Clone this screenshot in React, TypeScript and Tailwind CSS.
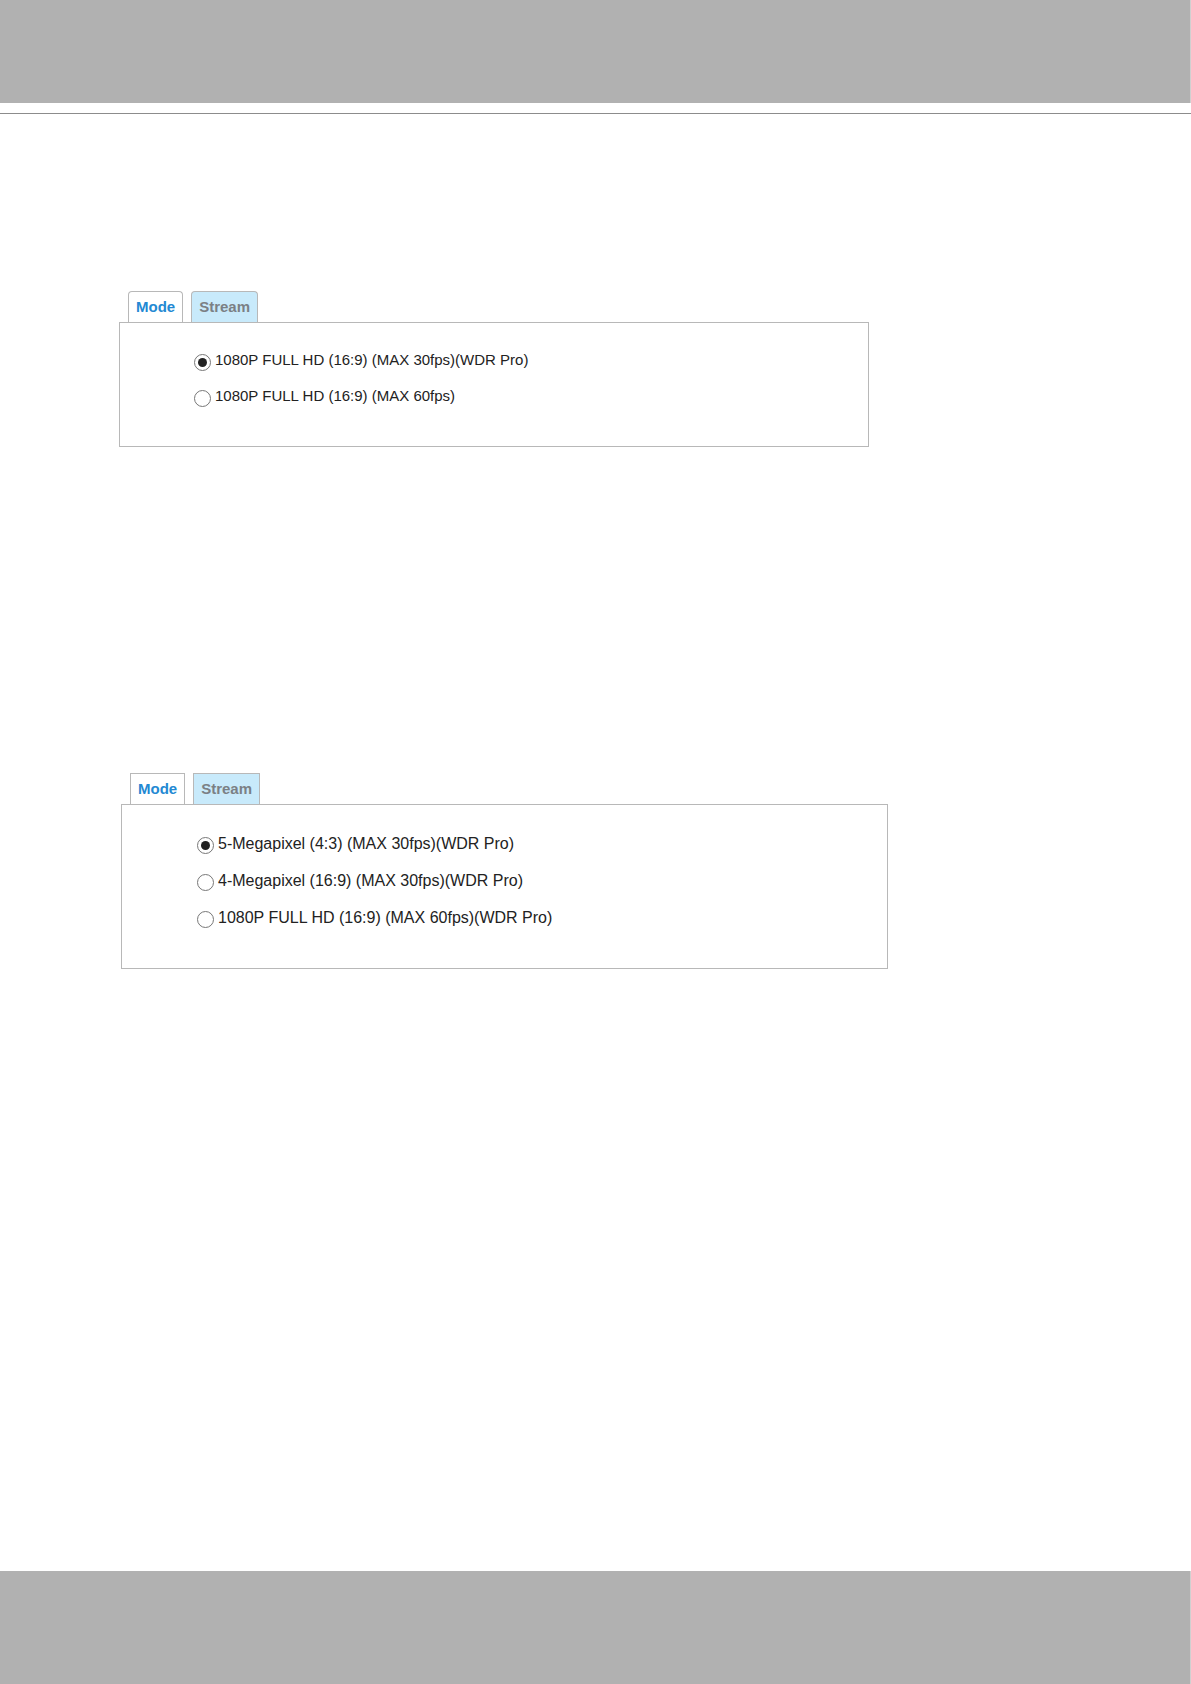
import { useState } from 'react'
import { clsx } from 'clsx'

interface ModePanelProps {
  name: string
  modes: string[]
  rounded?: boolean
  className?: string
  bodyClass: string
}

const TABS = ['Mode', 'Stream']

const SENSOR_A = [
  '1080P FULL HD (16:9) (MAX 30fps)(WDR Pro)',
  '1080P FULL HD (16:9) (MAX 60fps)',
]

const SENSOR_B = [
  '5-Megapixel (4:3) (MAX 30fps)(WDR Pro)',
  '4-Megapixel (16:9) (MAX 30fps)(WDR Pro)',
  '1080P FULL HD (16:9) (MAX 60fps)(WDR Pro)',
]

function ModePanel({ name, modes, rounded, className, bodyClass }: ModePanelProps) {
  const [selected, setSelected] = useState(0)

  return (
    <section className={clsx('w-full', className)}>
      <div role="tablist" className="flex gap-2 pl-[9px]">
        {TABS.map((tab, i) => (
          <button
            key={tab}
            type="button"
            role="tab"
            aria-selected={i === 0}
            className={clsx(
              'h-[31px] border border-b-0 border-[#b8b8b8] px-[7px] pb-[2px] text-[15px] leading-none font-bold',
              rounded && 'rounded-t',
              i === 0 ? 'bg-white text-[#2389d3]' : 'bg-[#c8eafb] text-[#7b8085]',
            )}
          >
            {tab}
          </button>
        ))}
      </div>

      <div className={clsx('flex flex-col border border-[#b8b8b8]', bodyClass)}>
        {modes.map((mode, i) => (
          <label key={mode} className="flex gap-1 text-[#222]">
            <input
              type="radio"
              name={name}
              checked={selected === i}
              onChange={() => setSelected(i)}
              className="mt-[3px] size-[17px] shrink-0 appearance-none rounded-full border border-[#777] bg-white checked:bg-[#222] checked:bg-clip-content checked:p-[3px]"
            />
            {mode}
          </label>
        ))}
      </div>
    </section>
  )
}

export default function App() {
  return (
    <div className="flex min-h-screen flex-col bg-white font-['Liberation_Sans',Arial,sans-serif]">
      <header className="border-b border-[#8c8c8c] pb-[10px]">
        <div className="h-[103px] border-r border-[#d0d0d0] bg-[#b1b1b1]" />
      </header>

      <main className="flex grow flex-col pl-[119px]">
        <ModePanel
          name="sensor-a"
          modes={SENSOR_A}
          rounded
          className="mt-[177px] max-w-[750px]"
          bodyClass="gap-4 pt-7 pb-[39px] pl-[74px] text-[15px] leading-[18px]"
        />
        <ModePanel
          name="sensor-b"
          modes={SENSOR_B}
          className="mt-[326px] ml-[2px] max-w-[767px]"
          bodyClass="gap-[17px] pt-[29px] pb-10 pl-[75px] text-base leading-5"
        />
      </main>

      <footer className="h-[113px] border-r border-[#d0d0d0] bg-[#b1b1b1]" />
    </div>
  )
}
